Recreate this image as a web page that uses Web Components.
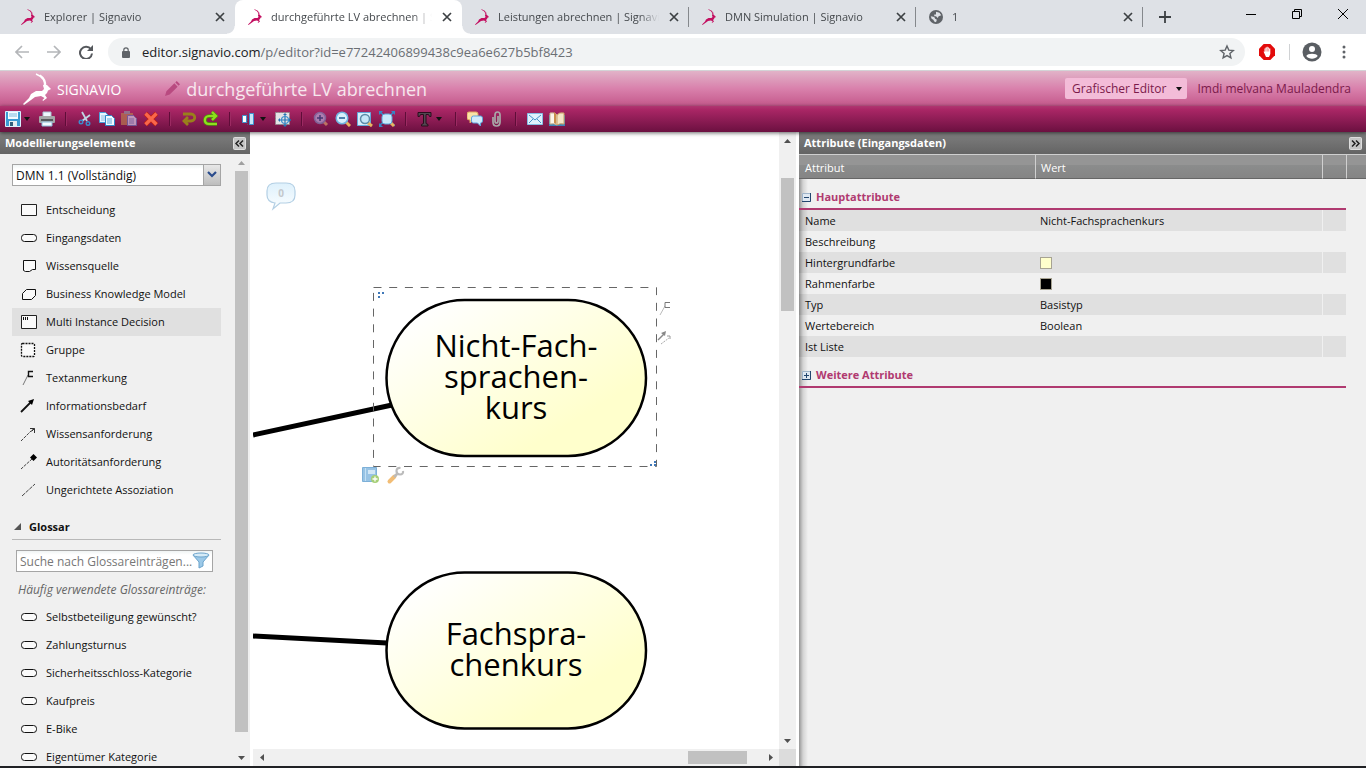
<!DOCTYPE html>
<html lang="de">
<head>
<meta charset="utf-8">
<title>durchgeführte LV abrechnen | Signavio</title>
<style>
  body { margin: 0; height: 100vh; display: flex; flex-direction: column; overflow: hidden;
    background: #fff; font-family: "Open Sans", "Noto Sans", sans-serif; font-size: 11px; color: #111; }
  main { flex: 1; min-height: 0; display: flex; border-bottom: 2px solid #202124; }
</style>
</head>
<body>
<tab-strip>
  <browser-tab label="Explorer | Signavio"></browser-tab>
  <browser-tab label="durchgeführte LV abrechnen | Signavio" active></browser-tab>
  <browser-tab label="Leistungen abrechnen | Signavio" divider></browser-tab>
  <browser-tab label="DMN Simulation | Signavio" divider></browser-tab>
  <browser-tab label="1" icon="globe" divider></browser-tab>
</tab-strip>
<address-bar></address-bar>
<app-header></app-header>
<editor-toolbar></editor-toolbar>
<main>
  <shape-palette></shape-palette>
  <diagram-canvas></diagram-canvas>
  <attribute-panel></attribute-panel>
</main>

<script>
const ICONS = {
  deer: ['0 0 28 32', '<path d="M13 1Q23 5 21.500 14M17 2Q23 6 22.500 13" fill="none" stroke="currentColor" stroke-width="1.500"/><path fill="currentColor" d="M20 12L24 12L28 16L25 17.500L24 20L22 22L24 25L20 28L19.500 27L21.500 25L18 23L12 24L8 27L1 32L0 31L6 25L8 21L13 18L19 18L21 16Z"/>'],
  globe: ['0 0 16 16', '<circle cx="8" cy="8" r="8" fill="#5f6368"/><path fill="#dee1e6" d="M2 7l4 1 1 2 2 1-1 3-2-1-1-2-2-1zM8 2l4 1 2 3-3 1-1 2-2-2H6V5h2z"/>'],
  close: ['0 0 12 12', '<path d="M2 2l8 8M10 2l-8 8" stroke="#3c4043" stroke-width="1.700"/>'],
  plus: ['0 0 12 12', '<path d="M6 0v12M0 6h12" stroke="#3c4043" stroke-width="1.800"/>'],
  min: ['0 0 10 10', '<path d="M0 5.500h10" stroke="#000"/>'],
  restore: ['0 0 10 10', '<path d="M.5 2.500h7v7h-7zM2.500 2.500v-2h7v7h-2" fill="none" stroke="#000"/>'],
  winclose: ['0 0 10 10', '<path d="M0 0l10 10M10 0L0 10" stroke="#000"/>'],
  back: ['0 0 14 14', '<path d="M14 7H1M7 1L1 7l6 6" fill="none" stroke="#b4b6b9" stroke-width="1.700"/>'],
  fwd: ['0 0 14 14', '<path d="M0 7h13M7 1l6 6-6 6" fill="none" stroke="#b4b6b9" stroke-width="1.700"/>'],
  reload: ['0 0 14 14', '<path d="M12 4.500A6 6 0 1 0 13 8.500" fill="none" stroke="#55585c" stroke-width="2"/><path d="M14 0v6H8z" fill="#55585c"/>'],
  lock: ['0 0 8 11', '<rect y="4" width="8" height="7" rx="1" fill="#5f6368"/><path d="M1.800 4V3a2.200 2.200 0 0 1 4.400 0v1" fill="none" stroke="#5f6368" stroke-width="1.200"/>'],
  star: ['0 0 16 16', '<path d="M8 2l1.800 4.100 4.500.4-3.400 3 1 4.400L8 11.600l-3.900 2.300 1-4.400-3.400-3 4.500-.4z" fill="none" stroke="#5f6368" stroke-width="1.400"/>'],
  adblock: ['0 0 16 16', '<path fill="#e30b0b" d="M4.700 0h6.600L16 4.700v6.600L11.300 16H4.700L0 11.300V4.700z"/><path fill="#fff" d="M4.500 7.500L5.500 7.800V4.500h1v-1h1.200V2.700h1v.8H10v1h1.300V10L10 13H7z"/><path d="M6.900 4.500v3M8.300 3.500v4M9.700 4.500v3" stroke="#e30b0b" stroke-width=".4"/>'],
  person: ['0 0 20 20', '<circle cx="10" cy="10" r="9.500" fill="#5a5e63"/><circle cx="10" cy="7" r="3" fill="#fff"/><path d="M4.300 14c1-3 10.400-3 11.400 0-2.500 3.600-8.900 3.600-11.400 0z" fill="#fff"/>'],
  dots: ['0 0 4 14', '<g fill="#5f6368"><circle cx="2" cy="2" r="1.500"/><circle cx="2" cy="7" r="1.500"/><circle cx="2" cy="12" r="1.500"/></g>'],
  pencil: ['0 0 16 16', '<path fill="#b94a80" d="M0 16l1.500-5L10 2.500 13.500 6 5 14.500zM11 1.500L12.500 0 16 3.500 14.500 5z"/>'],
  save: ['0 0 16 16', '<path d="M.5.500h15v15h-15z" fill="#3a9ad4" stroke="#d8f0ff"/><path d="M3 1h10v7H3z" fill="#f4fbff"/><path d="M4 3h8M4 5h8" stroke="#7cbbe0"/><path d="M4 10h8v5H4z" fill="#e6eef2"/><path d="M5 11h3v4H5z" fill="#315f7d"/>'],
  print: ['0 0 16 16', '<path d="M4 1h8v5H4z" fill="#eef7fd" stroke="#a9c4d3"/><rect y="5" width="16" height="7" rx="1" fill="#a5a7a8"/><path d="M2 9h12" stroke="#55595b" stroke-width="2"/><path d="M3 11h10v4H3z" fill="#f4fbff" stroke="#8bbbd8"/>'],
  cut: ['0 0 16 16', '<path d="M5 1l5 9M13 4L5 10" stroke="#bfd5e3" stroke-width="1.800"/><circle cx="4" cy="11" r="1.800" fill="none" stroke="#3d8ccb" stroke-width="1.400"/><circle cx="11" cy="12.500" r="1.800" fill="none" stroke="#3d8ccb" stroke-width="1.400"/>'],
  copy: ['0 0 16 16', '<path d="M.5 1.500h6l3 3v7h-9z" fill="#e9f6ff" stroke="#4a9fd8"/><path d="M2 5h5M2 7h5M2 9h5" stroke="#8cc0e4"/><path d="M6.500 4.500h6l3 3v7h-9z" fill="#f2faff" stroke="#2f89c8"/><path d="M8 8h5M8 10h5M8 12h5" stroke="#5ba8da"/>'],
  paste: ['0 0 16 16', '<g opacity=".7"><path d="M0 2h12v12H0z" fill="#b8794f"/><path d="M3 0h6v3H3z" fill="#8f8f9b"/><path d="M6.500 4.500h6l3 3v7h-9z" fill="#d5c9e4" stroke="#6c71b5"/><path d="M8 8h5M8 10h5M8 12h5" stroke="#7b80bd"/></g>'],
  del: ['0 0 16 16', '<path d="M2.500 2.500l11 11M13.500 2.500l-11 11" stroke="#c2200f" stroke-width="4.600"/><path d="M2.500 2.500l11 11M13.500 2.500l-11 11" stroke="#f9674b" stroke-width="3.200"/>'],
  undo: ['0 0 16 16', '<path d="M2 3h8c5 0 5 7 0 7H4M7 6l-4 4 4 4" fill="none" stroke="#99801b" stroke-width="2.800"/>'],
  redo: ['0 0 16 16', '<path d="M14 13H6c-6 0-5-8 0-8h7M9 1l4 4-4 4" fill="none" stroke="#4d9b0a" stroke-width="3.400"/><path d="M14 13H6c-6 0-5-8 0-8h7M9 1l4 4-4 4" fill="none" stroke="#8ee01c" stroke-width="2.200"/>'],
  align: ['0 0 16 16', '<path d="M1.500 4.500h4v7h-4z" fill="#fff" stroke="#3c94d0"/><path d="M8.500 2.500h4v11h-4z" fill="#c8e6f9" stroke="#3c94d0"/><path d="M6.500 1v14" stroke="#5a4a70" stroke-dasharray="1 1"/>'],
  move: ['0 0 16 16', '<path d="M.5 1.500h14v12H.5z" fill="#e3e3e6" stroke="#888" stroke-dasharray="2 1"/><path d="M10 4v11M5 9h11" stroke="#2573b4" stroke-width="1.200"/><circle cx="10" cy="9" r="3.500" fill="none" stroke="#3b8fce" stroke-width="1.200"/><path d="M10 2l2 2H8zM10 16l2-2H8zM3 9l2-2v4zM16 9l-2-2v4z" fill="#2573b4"/>'],
  zin: ['0 0 16 16', '<g opacity=".7"><path d="M10 10l4 4" stroke="#d59a6a" stroke-width="3"/><circle cx="7" cy="7" r="5.500" fill="#b7a6d4" stroke="#7d7fb4" stroke-width="1.500"/><path d="M7 4v6M4 7h6" stroke="#27417f" stroke-width="1.500"/></g>'],
  zout: ['0 0 16 16', '<path d="M11 11l4 4" stroke="#e9b45f" stroke-width="3"/><circle cx="7" cy="7" r="5.800" fill="#d9f0fc" stroke="#6fb4e0" stroke-width="1.500"/><path d="M4 7h6" stroke="#1f5c94" stroke-width="1.500"/>'],
  zpage: ['0 0 16 16', '<path d="M.5 1.500h13v13H.5z" fill="#d6effc" stroke="#63aadb"/><path d="M11 12l4 3" stroke="#e9b45f" stroke-width="3"/><circle cx="8" cy="8" r="4.500" fill="#c5e7f9" stroke="#5d8ba8" stroke-width="1.500"/>'],
  zfit: ['0 0 16 16', '<path d="M0 0l16 15M16 0L0 15" stroke="#3587c5" stroke-width="1.600"/><path d="M0 0h4L0 4zM16 0h-4l4 4zM0 16v-4l4 4z" fill="#3587c5"/><path d="M10 10l5 5" stroke="#e9b45f" stroke-width="3"/><rect x="3" y="3" width="10" height="10" rx="3" fill="#c9e9fa" stroke="#5daadb"/>'],
  text: ['0 0 16 16', '<path d="M1 1.500h13v4h-1.500l-1-2H9v9l2 1v1.500H4.500V13.500l2-1v-9H3.500l-1 2H1z" fill="#514850" stroke="#2b0d1d"/>'],
  chat: ['0 0 16 16', '<path d="M2 1h7q2 0 2 2v4q0 2-2 2H6l-3 3V9Q0 9 0 7V3q0-2 2-2z" fill="#fbe3a6" stroke="#e0a860"/><path d="M6.500 5h7q2 0 2 2v3q0 2-2 2v3l-3-3h-4q-2 0-2-2V7q0-2 2-2z" fill="#d3ecfb" stroke="#5ea5dc"/>'],
  clip: ['0 0 16 16', '<path d="M4 6v5q0 4 3.500 4t3.500-4V4q0-3-2.500-3T6 4v6q0 2 1.500 2T9 10V5" fill="none" stroke="#a9a9a9" stroke-width="1.700"/>'],
  mail: ['0 0 16 16', '<path d="M.5 2.500h15v11H.5z" fill="#dff2fd" stroke="#85bfe6"/><path d="M2 4l6 5 6-5M2 12l4-4M14 12l-4-4" fill="none" stroke="#4392c8"/>'],
  book: ['0 0 16 16', '<path d="M0 4h16v11H0z" fill="#3e83b8"/><path d="M1 2q5-1 7 2v10q-3-2-7-1z" fill="#fbf6ea" stroke="#c9b48d"/><path d="M15 2q-5-1-7 2v10q3-2 7-1z" fill="#f3e5c6" stroke="#c99e63"/><path d="M5 1l2 2v10l-2-1z" fill="#c98d4c"/>'],
  rect: ['0 0 18 16', '<path d="M1.500 2.500h15v11h-15z" fill="#fafafa" stroke="#222"/>'],
  pill: ['0 0 18 16', '<rect x="1.500" y="4.500" width="15" height="7" rx="3" fill="#fafafa" stroke="#111"/>'],
  source: ['0 0 18 16', '<path d="M3.500 2.500h12v9h-3l-3 2h-4l-2-1z" fill="#fafafa" stroke="#111"/>'],
  bkm: ['0 0 18 16', '<path d="M6.500 3.500h9v6l-4 4h-9v-6z" fill="#fafafa" stroke="#111"/>'],
  multi: ['0 0 18 16', '<path d="M1.500 1.500h15v13h-15z" fill="#fafafa" stroke="#222"/><path d="M3.500 3v3M5.500 3v3M7.500 3v3" stroke="#111"/>'],
  group: ['0 0 18 16', '<rect x="1.500" y="1.500" width="13" height="13" rx="1" fill="#fafafa" stroke="#111" stroke-width="1.300" stroke-dasharray="2 1"/>'],
  note: ['0 0 18 16', '<path d="M3 15L8 5" stroke="#777"/><path d="M13 1.500H8.500v5H13" fill="none" stroke="#111" stroke-width="1.400"/>'],
  info: ['0 0 18 16', '<path d="M1 14L11 4" stroke="#111" stroke-width="1.800"/><path d="M14 1L12 7 8 3z" fill="#000"/>'],
  know: ['0 0 18 16', '<path d="M1 15L13 3" stroke="#444" stroke-dasharray="3 1"/><path d="M10 2.500h4.500V7M14.500 2.500L11.500 5.500" fill="none" stroke="#333"/>'],
  auth: ['0 0 18 16', '<path d="M1 15L12 5" stroke="#444" stroke-dasharray="3 1"/><path d="M13.500 0l3.500 3.500-3.500 3.500L10 3.500z" fill="#000"/>'],
  assoc: ['0 0 18 16', '<path d="M2 14L15 2" stroke="#444" stroke-dasharray="4 1"/>'],
  funnel: ['0 0 18 18', '<path d="M1 3l6 7v6l4-2v-4l6-7z" fill="#9cc9e8" stroke="#6ba3cb"/><ellipse cx="9" cy="3" rx="8" ry="2" fill="#d6ebf7" stroke="#6ba3cb"/>'],
  fold: ['0 0 13 13', '<rect x=".5" y=".5" width="12" height="12" rx="1" fill="#c6c6c6" stroke="#dedede"/><path d="M6 3.500L3 6.500 6 9.500M10 3.500L7 6.500 10 9.500" fill="none" stroke="#222" stroke-width="1.500"/>'],
  foldr: ['0 0 13 13', '<rect x=".5" y=".5" width="12" height="12" rx="1" fill="#c6c6c6" stroke="#dedede"/><path d="M3 3.500L6 6.500 3 9.500M7 3.500L10 6.500 7 9.500" fill="none" stroke="#222" stroke-width="1.500"/>'],
  caret: ['0 0 6 4', '<path d="M0 0h6L3 4z" fill="#111"/>'],
  chevron: ['0 0 10 8', '<path d="M1 1l4 4 4-4" fill="none" stroke="#2a4c8c" stroke-width="2.200"/>'],
  tree: ['0 0 8 8', '<path d="M7 0v7H0z" fill="#555"/>'],
  up: ['0 0 7 4', '<path d="M0 4h7L3.500 0z" fill="currentColor"/>'],
  down: ['0 0 7 4', '<path d="M0 0h7L3.500 4z" fill="currentColor"/>'],
  left: ['0 0 4 7', '<path d="M4 0v7L0 3.500z" fill="currentColor"/>'],
  right: ['0 0 4 7', '<path d="M0 0v7l4-3.500z" fill="currentColor"/>'],
  minusbox: ['0 0 9 9', '<path d="M.5.500h8v8h-8z" fill="#dfe8f2" stroke="#a0b4c9"/><path d="M8.500 0v8.500H0M2 4.500h5" fill="none" stroke="#23466e"/>'],
  plusbox: ['0 0 9 9', '<path d="M.5.500h8v8h-8z" fill="#dfe8f2" stroke="#a0b4c9"/><path d="M8.500 0v8.500H0M2 4.500h5M4.500 2v5" fill="none" stroke="#23466e"/>']
};

function icon(name, w, h) {
  const [box, body] = ICONS[name];
  const [, , bw, bh] = box.split(' ');
  return `<svg aria-hidden="true" viewBox="${box}" width="${w || bw}" height="${h || bh}">${body}</svg>`;
}

const RESET = `
  :host, *, *::before, *::after { box-sizing: border-box; }
  svg { display: block; flex: none; }
  button { border: 0; padding: 0; background: none; font: inherit; color: inherit; display: flex; align-items: center; justify-content: center; flex: none; }
`;

function define(tag, css, html) {
  customElements.define(tag, class extends HTMLElement {
    constructor() {
      super();
      this.attachShadow({ mode: 'open' });
    }
    connectedCallback() {
      this.shadowRoot.innerHTML = `<style>${RESET}${css}</style>${typeof html === 'function' ? html(this) : html}`;
    }
  });
}

/* Browser chrome */
define('browser-tab', `
  :host { display: flex; flex: 0 1 227px; min-width: 0; height: 34px; align-items: center; gap: 9px; padding: 0 9px 0 13px; position: relative; color: #45494d; }
  :host([active]) { background: #fff; border-radius: 8px 8px 0 0; }
  :host([active])::before, :host([active])::after { content: ""; position: absolute; bottom: 0; width: 8px; height: 8px; }
  :host([active])::before { left: -8px; background: radial-gradient(circle at 0 0, transparent 7px, #fff 8px); }
  :host([active])::after { right: -8px; background: radial-gradient(circle at 100% 0, transparent 7px, #fff 8px); }
  .line { position: absolute; right: 0; top: 7px; width: 1px; height: 20px; background: #85888c; }
  .label { flex: 1; min-width: 0; overflow: hidden; white-space: nowrap; line-height: 16px;
    -webkit-mask-image: linear-gradient(to right, #000 calc(100% - 20px), transparent); mask-image: linear-gradient(to right, #000 calc(100% - 20px), transparent); }
  .fav { color: #c30f60; width: 14px; display: flex; }
  button { width: 12px; height: 12px; }
`, el => `<span class="fav">${el.getAttribute('icon') ? icon('globe', 14, 14) : icon('deer', 14, 16)}</span>
  <span class="label">${el.getAttribute('label')}</span>
  <button aria-label="Tab schließen">${icon('close')}</button>${el.hasAttribute('divider') ? '<i class="line"></i>' : ''}`);

define('tab-strip', `
  :host { display: flex; flex: none; height: 34px; background: #dee1e6; padding-left: 8px; }
  .new { width: 44px; height: 34px; }
  .win { display: flex; margin-left: auto; }
  .win button { width: 46px; height: 28px; }
`, `<slot></slot><button class="new" aria-label="Neuer Tab">${icon('plus')}</button>
  <div class="win"><button aria-label="Minimieren">${icon('min')}</button><button aria-label="Verkleinern">${icon('restore')}</button><button aria-label="Schließen">${icon('winclose')}</button></div>`);

define('address-bar', `
  :host { display: flex; flex: none; height: 37px; align-items: center; padding: 0 20px 0 15px; border-bottom: 1px solid #d3d3d6; background: #fff; }
  nav { display: flex; gap: 18px; margin-right: 15px; }
  .pill { flex: 1; min-width: 0; display: flex; align-items: center; height: 28px; border-radius: 14px; background: #f1f3f4; padding: 0 10px 0 14px; gap: 12px; }
  .url { flex: 1; font-size: 13px; line-height: 20px; color: #6b6f74; white-space: nowrap; overflow: hidden; }
  b { font-weight: 400; color: #202124; }
  .ad { margin-left: 14px; }
  i { width: 1px; height: 16px; background: #d0d2d4; margin: 0 12px 0 14px; }
  .menu { margin-left: 20px; }
`, `<nav><button aria-label="Zurück">${icon('back')}</button><button aria-label="Vorwärts">${icon('fwd')}</button><button aria-label="Neu laden">${icon('reload')}</button></nav>
  <div class="pill">${icon('lock')}<span class="url"><b>editor.signavio.com</b>/p/editor?id=e77242406899438c9ea6e627b5bf8423</span><button aria-label="Lesezeichen">${icon('star')}</button></div>
  <button class="ad" aria-label="AdBlock">${icon('adblock')}</button><i></i><button aria-label="Profil">${icon('person')}</button><button class="menu" aria-label="Menü">${icon('dots')}</button>`);

/* Application bars */
define('app-header', `
  :host { display: flex; flex: none; height: 35px; align-items: center; padding: 0 15px 0 23px; background: linear-gradient(#e1b3c8, #d981ac 50%, #c4588b); color: #7b1a4b; font-size: 12px; }
  .logo { display: flex; align-items: center; gap: 6px; color: #fff; font-size: 14px; line-height: 20px; margin-right: 44px; text-decoration: none; }
  .logo span { padding-top: 2px; }
  h1 { margin: 0 auto 0 6px; font-size: 18px; line-height: 24px; font-weight: 400; color: #f7e7ee; white-space: nowrap; }
  .mode { height: 21px; padding: 0 5px 0 7px; gap: 10px; border-radius: 2px; background: #f3bcd8; margin-right: 10px; }
`, `<a class="logo" href="#">${icon('deer')}<span>SIGNAVIO</span></a>${icon('pencil', 15, 15)}
  <h1>durchgeführte LV abrechnen</h1>
  <button class="mode">Grafischer Editor ${icon('caret')}</button><span>Imdi melvana Mauladendra</span>`);

const TOOLS = ['save+Speichern', 'print|Drucken', '-', 'cut|Ausschneiden', 'copy|Kopieren', 'paste|Einfügen', 'del|Löschen', '-',
  'undo|Rückgängig', 'redo|Wiederholen', '-', 'align+Ausrichten', 'move|Größe anpassen', '-', 'zin|Vergrößern', 'zout|Verkleinern',
  'zpage|Originalgröße', 'zfit|Einpassen', '-', 'text+Schrift', '-', 'chat|Kommentare', 'clip|Anhang', '-', 'mail|Einladen', 'book|Handbuch'];
define('editor-toolbar', `
  :host { display: flex; flex: none; height: 26px; align-items: center; gap: 6px; padding-left: 5px; position: relative; z-index: 2;
    background: linear-gradient(#b03671 0, #a92665 15%, #6b1040); box-shadow: 0 1px 4px rgba(0,0,0,.6); }
  button { width: 16px; height: 24px; }
  .drop { width: 28px; gap: 3px; justify-content: flex-start; }
  i { width: 10px; height: 14px; background: linear-gradient(to right, transparent 4px, #5f0c38 4px, #5f0c38 5px, #9c2a62 5px, #9c2a62 6px, transparent 6px); }
`, TOOLS.map(t => {
  if (t === '-') return '<i></i>';
  const [n, label] = t.split(/[|+]/);
  return t.includes('+') ? `<button class="drop" aria-label="${label}">${icon(n)}${icon('caret')}</button>` : `<button aria-label="${label}">${icon(n)}</button>`;
}).join(''));

/* A scroll bar; before, size and after weigh the track and the thumb */
define('scroll-bar', `
  :host { display: flex; flex-direction: column; width: 17px; background: #f0f0f0; color: #505050; }
  :host([faint]) .first { color: #a0a0a0; }
  .end { flex: none; width: 17px; height: 17px; display: flex; align-items: center; justify-content: center; }
  .thumb { background: #c1c1c1; margin: 0 2px; }
  .gap, .thumb { flex-basis: 0; }
  :host([horizontal]) { flex-direction: row; width: auto; height: 17px; }
  :host([horizontal]) .thumb { margin: 2px 0; }
`, el => {
  const h = el.hasAttribute('horizontal'), g = n => `flex-grow:${el.getAttribute(n)}`;
  return `<span class="end first">${icon(h ? 'left' : 'up')}</span><span class="gap" style="${g('before')}"></span><span class="thumb" style="${g('size')}"></span><span class="gap" style="${g('after')}"></span><span class="end">${icon(h ? 'right' : 'down')}</span>`;
});

define('panel-title', `
  :host { display: flex; flex: none; height: 22px; align-items: center; justify-content: space-between; padding: 0 4px 0 5px; background: linear-gradient(#7f7f7f, #646464); }
  h2 { margin: 0; font-size: 11px; line-height: 16px; color: #fff; }
`, el => `<h2><slot></slot></h2><button aria-label="Einklappen">${icon(el.hasAttribute('right') ? 'foldr' : 'fold')}</button>`);

define('palette-item', `
  :host { display: flex; align-items: center; height: 28px; flex: none; padding-left: 8px; gap: 8px; line-height: 16px; white-space: nowrap; }
  :host([hovered]) { background: #e0e0e0; }
`, el => `${icon(el.getAttribute('shape'))}<slot></slot>`);

const item = (shape, label, extra = '') => `<palette-item shape="${shape}" ${extra}>${label}</palette-item>`;
define('shape-palette', `
  :host { display: flex; flex-direction: column; flex: none; width: 250px; background: #f0f0f0; min-height: 0; }
  .row { flex: 1; display: flex; min-height: 0; }
  .body { flex: 1; min-width: 0; overflow: hidden; display: flex; flex-direction: column; padding: 10px 12px 0; }
  .combo, .search { display: flex; flex: none; align-items: center; height: 22px; border: 1px solid #a5a5a5; background: linear-gradient(#f0f4f4, #fff 4px); }
  .combo { margin-bottom: 10px; }
  select, input { appearance: none; border: 0; outline: 0; background: none; flex: 1; min-width: 0; height: 20px; padding: 0 3px; font: 12px/16px "Open Sans", "Noto Sans", sans-serif; color: #111; }
  select { padding-top: 2px; }
  input::placeholder { color: #777; opacity: 1; }
  .arrow { width: 17px; height: 20px; display: flex; align-items: center; justify-content: center; background: linear-gradient(#e8e8e8, #bdbdbd); border-left: 1px solid #a5a5a5; }
  h3 { display: flex; flex: none; align-items: center; gap: 7px; height: 26px; margin: 10px 0; padding: 0 2px; border-bottom: 1px solid #b8b8b8; font-size: 11px; }
  .search { margin: 0 8px 0 4px; padding-right: 2px; }
  .search input { padding-right: 0; }
  p { margin: 10px 0 5px 6px; flex: none; font-size: 12px; font-style: italic; line-height: 16px; color: #666; white-space: nowrap; }
`, `<panel-title>Modellierungselemente</panel-title>
<div class="row"><div class="body">
  <div class="combo"><select aria-label="Stencil-Set"><option>DMN 1.1 (Vollständig)</option></select><span class="arrow">${icon('chevron')}</span></div>
  ${item('rect', 'Entscheidung')}${item('pill', 'Eingangsdaten')}${item('source', 'Wissensquelle')}${item('bkm', 'Business Knowledge Model')}
  ${item('multi', 'Multi Instance Decision', 'hovered')}${item('group', 'Gruppe')}${item('note', 'Textanmerkung')}${item('info', 'Informationsbedarf')}
  ${item('know', 'Wissensanforderung')}${item('auth', 'Autoritätsanforderung')}${item('assoc', 'Ungerichtete Assoziation')}
  <h3>${icon('tree')}Glossar</h3>
  <div class="search"><input aria-label="Glossarsuche" placeholder="Suche nach Glossareinträgen...">${icon('funnel')}</div>
  <p>Häufig verwendete Glossareinträge:</p>
  ${['Selbstbeteiligung gewünscht?', 'Zahlungsturnus', 'Sicherheitsschloss-Kategorie', 'Kaufpreis', 'E-Bike', 'Eigentümer Kategorie'].map(t => item('pill', t)).join('')}
</div><scroll-bar faint before="0" size="561" after="17"></scroll-bar></div>`);

/* Diagram */
define('diagram-canvas', `
  :host { flex: 1; min-width: 0; display: grid; grid-template: minmax(0, 1fr) 17px / minmax(0, 1fr) 17px; padding: 0 3px; background: #fff; }
  .paper { width: 100%; height: 100%; overflow: hidden; }
  .corner { background: #dcdcdc; }
  .name { font: 31px "Open Sans", "Noto Sans", sans-serif; text-anchor: middle; fill: #000; }
  .count { font: bold 10px "Open Sans", sans-serif; text-anchor: middle; fill: #c4c8cc; }
`, `<svg class="paper" role="img" aria-label="Diagramm">
  <defs>
    <linearGradient id="fill" x1="0" y1="0" x2="1" y2="1"><stop offset=".1" stop-color="#fff"/><stop offset=".75" stop-color="#ffffcc"/></linearGradient>
    <linearGradient id="bubble" x1="0" y1="0" x2="0" y2="1"><stop offset="0" stop-color="#def1fc"/><stop offset="1" stop-color="#fbfeff"/></linearGradient>
  </defs>
  <path d="M23 51h10q9 0 9 8v4q0 8-9 8H27l-7 6 2-6q-8-1-8-8v-4q0-8 9-8z" fill="url(#bubble)" stroke="#b3cfe4" stroke-width="1.200"/>
  <text class="count" x="28" y="65">0</text>
  <path d="M0 303L139 273M0 504l134 7" stroke="#000" stroke-width="5"/>
  <g fill="url(#fill)" stroke="#000" stroke-width="2.500"><rect x="133.500" y="168" width="259.500" height="156" rx="78"/><rect x="133.500" y="440.500" width="259.500" height="156" rx="78"/></g>
  <text class="name" x="263" y="225">Nicht-Fach-</text><text class="name" x="263" y="256">sprachen-</text><text class="name" x="263" y="287">kurs</text>
  <text class="name" x="263" y="513">Fachspra-</text><text class="name" x="263" y="544">chenkurs</text>
  <path d="M120.500 155.500h283v179h-283z" fill="none" stroke="#666" stroke-dasharray="8 7.700"/>
  <path d="M125 160h2v2h-2zM129 160h2v2h-2zM125 164h2v2h-2zM401 329h2v2h-2zM397 332h2v2h-2zM401 332h2v2h-2z" fill="#3f78b8"/>
  <path d="M407 183l5-9" stroke="#bbb"/><path d="M417 170.500h-5v5h5" fill="none" stroke="#777"/>
  <path d="M405 208l6-6" stroke="#888" stroke-width="1.500"/><path d="M413 199l-1 5-4-3z" fill="#888"/><path d="M408 212l8-6" stroke="#aaa" stroke-dasharray="2 1"/><path d="M414 204h3v3" fill="none" stroke="#999"/>
  <g opacity=".8"><path d="M109.500 335.500h14v14h-14z" fill="#7fb5de" stroke="#5d9dcf"/><path d="M115 338h7v4h-7z" fill="#c7e2f4"/><path d="M112.500 336v13" stroke="#b5d9f2"/><circle cx="122" cy="347" r="4" fill="#91c456"/><path d="M122 344.500v5M119.500 347h5" stroke="#fff" stroke-width="1.300"/></g>
  <path d="M136.500 349.500l5-5" stroke="#f2bd75" stroke-width="4" stroke-linecap="round"/><path d="M141 345l4-4" stroke="#bbb" stroke-width="2.500"/><path d="M147.500 336q-4-.5-4 3t3.500 3.500 3-3.500" fill="none" stroke="#bbb" stroke-width="2.200"/>
</svg>
<scroll-bar before="29" size="133" after="421"></scroll-bar>
<scroll-bar horizontal before="418" size="59" after="15"></scroll-bar><span class="corner"></span>`);

/* Attributes */
const ATTRS = [['Name', 'Nicht-Fachsprachenkurs'], ['Beschreibung', ''], ['Hintergrundfarbe', '<span class="swatch" style="background:#ffffcc"></span>'],
  ['Rahmenfarbe', '<span class="swatch" style="background:#000"></span>'], ['Typ', 'Basistyp'], ['Wertebereich', 'Boolean'], ['Ist Liste', '']];
define('attribute-panel', `
  :host { display: flex; flex-direction: column; flex: 0 0 567px; background: linear-gradient(to right, rgba(0,0,0,.38), rgba(0,0,0,.12) 4px, transparent 9px) #f0f0f0; }
  table { width: 100%; table-layout: fixed; border-collapse: separate; border-spacing: 0; border-top: 1px solid #cfcfcf; }
  th, td { padding: 0 0 0 5px; text-align: left; font-weight: 400; line-height: 16px; }
  .name { width: 236px; } .tool { width: 24px; } .gutter { width: 20px; }
  thead th { height: 24px; padding-top: 2px; color: #fff; background: linear-gradient(#959595 10px, #8b8c8c 10px, #858585); border-bottom: 1px solid #666; }
  tr > .name, tbody th { padding-left: 6px; }
  thead th + th { border-left: 1px solid #d0d0d0; }
  .group th { height: 31px; border-bottom: 2px solid #b03a70; padding: 7px 0 0 3px; }
  .group button { gap: 5px; color: #b03a70; font-weight: 700; line-height: 16px; }
  .attr > * { height: 21px; }
  .attr td + td { border-left: 1px solid #f0f0f0; }
  .attr.odd > :not(:last-child) { background: rgba(0,0,0,.065); }
  .swatch { display: block; width: 12px; height: 12px; border: 1px solid #a7a392; }
`, `<panel-title right>Attribute (Eingangsdaten)</panel-title>
<table><thead><tr><th class="name">Attribut</th><th>Wert</th><th class="tool"></th><th class="gutter"></th></tr></thead>
<tbody><tr class="group"><th colspan="3"><button>${icon('minusbox')}Hauptattribute</button></th><td></td></tr>
${ATTRS.map(([k, v], i) => `<tr class="attr ${i % 2 ? '' : 'odd'}"><th scope="row">${k}</th><td>${v}</td><td></td><td></td></tr>`).join('')}
<tr class="group"><th colspan="3"><button>${icon('plusbox')}Weitere Attribute</button></th><td></td></tr></tbody></table>`);
</script>
</body>
</html>
